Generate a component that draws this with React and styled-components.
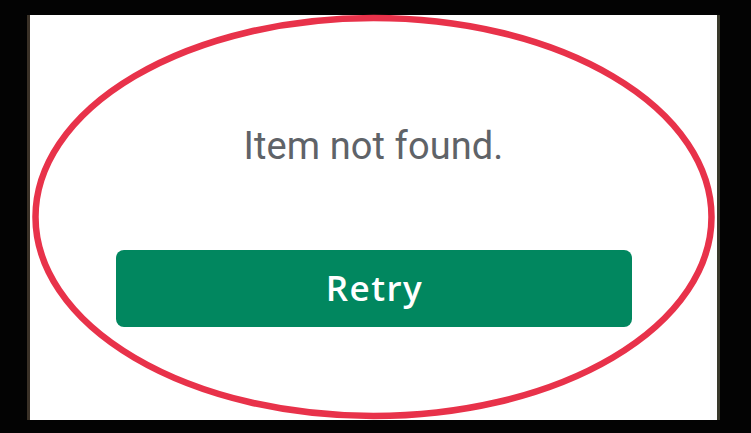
import styled, { createGlobalStyle } from 'styled-components'

const GlobalStyle = createGlobalStyle`
  html, body {
    margin: 0;
    padding: 0;
    background: #030303;
  }
  * {
    box-sizing: border-box;
  }
`

const Screen = styled.div`
  width: 751px;
  height: 433px;
  background: #030303;
  padding: 15px 31px 13px 27px;
  overflow: hidden;
`

const Panel = styled.div`
  position: relative;
  height: 100%;
  background: #ffffff;
  border-left: 3px solid #3a3127;
  border-right: 3px solid #3a3a2c;
  display: flex;
  flex-direction: column;
  align-items: center;
  padding-top: 108px;
  font-family: Roboto, "Noto Sans", Arial, sans-serif;
`

const Message = styled.div`
  font-size: 38px;
  line-height: 46px;
  color: #5f6368;
  letter-spacing: 0.1px;
`

const RetryButton = styled.button`
  margin-top: 81px;
  width: 516px;
  height: 77px;
  border: none;
  border-radius: 8px;
  background: #01875f;
  color: #ffffff;
  font-family: "Open Sans", Roboto, Arial, sans-serif;
  font-size: 35px;
  font-weight: 600;
  letter-spacing: 1.5px;
  line-height: 42px;
  display: flex;
  align-items: center;
  justify-content: center;
  padding: 0 0 2px 2px;
  cursor: pointer;
`

const Circle = styled.svg`
  position: absolute;
  left: -30px;
  top: -15px;
  width: 751px;
  height: 433px;
  pointer-events: none;
`

const App = () => {
  return (
    <>
      <GlobalStyle />
      <Screen>
        <Panel>
          <Message>Item not found.</Message>
          <RetryButton>Retry</RetryButton>
          <Circle viewBox="0 0 751 433">
            <ellipse
              cx="373.5"
              cy="217"
              rx="338"
              ry="199"
              fill="none"
              stroke="#e8324a"
              strokeWidth="6.5"
            />
          </Circle>
        </Panel>
      </Screen>
    </>
  )
}

export default App
